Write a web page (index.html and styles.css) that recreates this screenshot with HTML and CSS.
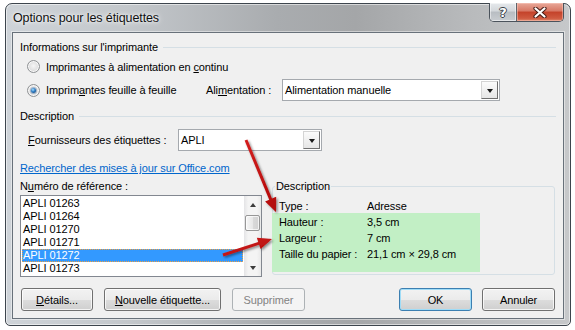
FILE: index.html
```html
<!DOCTYPE html>
<html lang="fr">
<head>
<meta charset="utf-8">
<title>Options pour les étiquettes</title>
<link rel="stylesheet" href="styles.css">
</head>
<body>
<div class="window">
  <div class="titlebar">
    <span class="title">Options pour les étiquettes</span>
    <div class="caption">
      <div class="cbtn help"><span class="qmark">?</span></div>
      <div class="cbtn close">
        <svg width="14" height="11" viewBox="0 0 14 11"><path d="M2.5 1.5 L11.5 9.5 M11.5 1.5 L2.5 9.5" stroke="#4a1f18" stroke-width="4.2" stroke-linecap="round"/><path d="M2.5 1.5 L11.5 9.5 M11.5 1.5 L2.5 9.5" stroke="#ffffff" stroke-width="2.2" stroke-linecap="round"/></svg>
      </div>
    </div>
  </div>
  <div class="client">
    <div class="ghead"><span>Informations sur l'imprimante</span></div>
    <div class="rrow r1"><span class="radio"></span><span class="rtext">Imprimantes à alimentation en <u>c</u>ontinu</span></div>
    <div class="rrow r2">
      <span class="radio checked"></span><span class="rtext r2label">Imprim<u>a</u>ntes feuille à feuille</span>
      <span class="alim-label">Ali<u>m</u>entation :</span>
      <div class="combo alim"><span class="ctext">Alimentation manuelle</span><span class="drop"><span class="tri-down"></span></span></div>
    </div>
    <div class="ghead h2"><span>Description</span></div>
    <div class="frow">
      <span class="flabel"><u>F</u>ournisseurs des étiquettes :</span>
      <div class="combo vendor"><span class="ctext">APLI</span><span class="drop"><span class="tri-down"></span></span></div>
    </div>
    <a class="link">Rechercher des mises à jour sur Office.com</a>
    <div class="lower">
      <div class="leftcol">
        <div class="lab">N<u>u</u>méro de référence :</div>
        <div class="listbox">
          <ul class="items">
            <li>APLI 01263</li>
            <li>APLI 01264</li>
            <li>APLI 01270</li>
            <li>APLI 01271</li>
            <li class="sel">APLI 01272</li>
            <li>APLI 01273</li>
          </ul>
          <div class="vscroll">
            <div class="sbtn"><span class="tri-up"></span></div>
            <div class="thumb"></div>
            <div class="track"></div>
            <div class="sbtn"><span class="tri-down small"></span></div>
          </div>
        </div>
      </div>
      <fieldset class="descbox">
        <legend>Description</legend>
        <div class="props">
          <span>Type :</span><span>Adresse</span>
          <span>Hauteur :</span><span>3,5 cm</span>
          <span>Largeur :</span><span>7 cm</span>
          <span>Taille du papier :</span><span>21,1 cm × 29,8 cm</span>
        </div>
      </fieldset>
    </div>
    <div class="buttons">
      <div class="btn b-details"><span><u>D</u>étails...</span></div>
      <div class="btn b-new"><span><u>N</u>ouvelle étiquette...</span></div>
      <div class="btn b-del disabled"><span>Supprimer</span></div>
      <div class="btn b-ok default"><span>OK</span></div>
      <div class="btn b-cancel"><span>Annuler</span></div>
    </div>
  </div>
</div>
<svg class="arrows" width="575" height="330" viewBox="0 0 575 330">
  <defs>
    <filter id="sh" x="-20%" y="-20%" width="140%" height="140%">
      <feDropShadow dx="1.5" dy="1.5" stdDeviation="1.2" flood-color="#000" flood-opacity="0.45"/>
    </filter>
    <linearGradient id="rg" x1="0" y1="0" x2="1" y2="1">
      <stop offset="0" stop-color="#d42020"/>
      <stop offset="1" stop-color="#b00808"/>
    </linearGradient>
  </defs>
  <polygon filter="url(#sh)" fill="url(#rg)" points="244.62,140.58 269.23,199.66 265.08,201.39 276,212 276.16,196.77 272.0,198.50 247.38,139.42"/>
  <polygon filter="url(#sh)" fill="url(#rg)" points="223.47,256.43 259.16,244.78 260.55,249.05 272,239 256.83,237.65 258.22,241.92 222.53,253.57"/>
</svg>
</body>
</html>
```
FILE: styles.css
```css
* { box-sizing: border-box; }
html, body { margin: 0; }
body {
  position: relative;
  width: 575px;
  height: 330px;
  padding: 3px 0 0 5px;
  background: #ffffff;
  overflow: hidden;
  font-family: "Liberation Sans", Arial, sans-serif;
  font-size: 11px;
  letter-spacing: -0.1px;
  color: #000;
}
u { text-decoration: underline; text-underline-offset: 1px; }

.window {
  width: 566px;
  height: 323px;
  border: 1px solid #3d454d;
  border-radius: 7px 7px 5px 5px;
  padding: 0 6px;
  background: linear-gradient(to right, #ced3d8 0%, #c3c7cb 22%, #a9acaf 48%, #a4a6a8 62%, #b8babc 82%, #c6c8ca 100%);
  box-shadow: inset 0 0 0 1px rgba(255,255,255,0.55);
}
.titlebar {
  height: 28px;
  display: flex;
  align-items: center;
}
.title {
  margin-left: 1px;
  font-size: 12.5px;
  color: #111;
  text-shadow: 0 0 6px rgba(255,255,255,0.95), 0 0 3px rgba(255,255,255,0.9);
}
.caption {
  margin-left: auto;
  align-self: flex-start;
  margin-top: -1px;
  display: flex;
  height: 19px;
  border: 1px solid #4b535c;
  border-top: none;
  border-radius: 0 0 5px 5px;
  overflow: hidden;
}
.cbtn {
  height: 18px;
  display: flex;
  align-items: center;
  justify-content: center;
}
.help {
  width: 27px;
  background: linear-gradient(#e6e9ec, #d3d7db 45%, #b8bdc2 50%, #c9cdd1);
  border-right: 1px solid #5d646b;
  box-shadow: inset 0 0 0 1px rgba(255,255,255,0.5);
}
.qmark {
  font-family: "DejaVu Sans", sans-serif;
  font-weight: bold;
  font-size: 13px;
  line-height: 13px;
  color: #fff;
  text-shadow: 1px 0 0 #3a4148, -1px 0 0 #3a4148, 0 1px 0 #3a4148, 0 -1px 0 #3a4148;
}
.close {
  width: 46px;
  background: linear-gradient(#e8a899, #d77764 45%, #c4422a 50%, #cf5a40 85%, #df8a6e);
  box-shadow: inset 0 0 0 1px rgba(255,210,200,0.45);
}

.client {
  height: 287px;
  border: 1px solid #68717a;
  box-shadow: 0 0 0 1px rgba(255,255,255,0.45);
  background: #f0f0f0;
  padding: 7px 7px 0 7px;
}
.ghead {
  height: 14px;
  line-height: 14px;
  display: flex;
  align-items: center;
}
.ghead::after {
  content: "";
  flex: 1;
  height: 1px;
  margin-left: 5px;
  background: #d5dfe5;
}
.ghead.h2 { margin-top: 8px; }

.rrow {
  display: flex;
  align-items: center;
}
.rrow.r1 { margin-top: 4px; height: 17px; }
.rrow.r2 { margin-top: 4px; height: 22px; }
.radio {
  width: 13px;
  height: 13px;
  margin-left: 7px;
  border-radius: 50%;
  border: 1px solid #8f9294;
  background: radial-gradient(circle at 50% 45%, #f6f6f6 0%, #e4e4e4 45%, #c9c9c9 100%);
  box-shadow: inset 0 0 0 1px rgba(255,255,255,0.8);
  display: flex;
  align-items: center;
  justify-content: center;
  flex: none;
}
.radio.checked::after {
  content: "";
  width: 5px;
  height: 5px;
  border-radius: 50%;
  background: radial-gradient(circle at 40% 35%, #a9e2ff 0%, #2d7bc4 45%, #0d3966 100%);
  box-shadow: 0 0 0 1px rgba(30,80,140,0.35);
}
.rtext { margin-left: 6px; }
.r2label { width: 160px; flex: none; }
.alim-label { width: 76px; flex: none; }

.combo {
  height: 22px;
  border: 1px solid #a5a9ae;
  background: #fff;
  display: flex;
  align-items: center;
  padding: 1px;
  flex: none;
}
.combo.alim { width: 218px; }
.combo.vendor { width: 144px; }
.ctext { flex: 1; padding-left: 1px; }
.drop {
  width: 17px;
  height: 18px;
  border: 1px solid;
  border-color: #d4d4d4 #6f6f6f #6f6f6f #d4d4d4;
  background: linear-gradient(#fbfbfb, #e6e6e6);
  display: flex;
  align-items: center;
  justify-content: center;
}
.tri-down {
  width: 0;
  height: 0;
  border-left: 3.5px solid transparent;
  border-right: 3.5px solid transparent;
  border-top: 4px solid #1a1a1a;
  margin-top: 1px;
}
.tri-up {
  width: 0;
  height: 0;
  border-left: 3.5px solid transparent;
  border-right: 3.5px solid transparent;
  border-bottom: 4px solid #3c3c3c;
}
.tri-down.small { border-top-color: #3c3c3c; margin-top: 0; }

.frow {
  margin-top: 6px;
  height: 22px;
  display: flex;
  align-items: center;
}
.flabel { margin-left: 8px; width: 150px; flex: none; }

.link {
  display: block;
  margin-top: 10px;
  height: 14px;
  line-height: 14px;
  color: #0066cc;
  text-decoration: underline;
  text-underline-offset: 1px;
}

.lower {
  margin-top: 4px;
  display: flex;
  gap: 10px;
}
.leftcol { width: 242px; }
.lab { height: 14px; line-height: 14px; }
.listbox {
  margin-top: 2px;
  height: 82px;
  border: 1px solid #828790;
  background: #fff;
  display: flex;
}
.items {
  flex: 1;
  margin: 0;
  padding: 1px 1px 0 1px;
  list-style: none;
}
.items li {
  height: 13px;
  line-height: 13px;
  padding-left: 1px;
}
.items li.sel {
  background: #3399ff;
  color: #fff;
  outline: 1px dotted #f0a040;
  outline-offset: -1px;
}
.vscroll {
  width: 17px;
  display: flex;
  flex-direction: column;
  background: linear-gradient(to right, #e4e4e6, #f4f4f4 25%, #f4f4f4 75%, #e9e9e9);
}
.sbtn {
  height: 17px;
  display: flex;
  align-items: center;
  justify-content: center;
}
.thumb {
  margin: 2px 1px 0 1px;
  height: 16px;
  border: 1px solid #979797;
  border-radius: 2px;
  background: linear-gradient(to right, #f6f6f6, #e8e8e8 50%, #dadada 50%, #d2d2d2);
  box-shadow: inset 0 0 0 1px rgba(255,255,255,0.7);
}
.track { flex: 1; }

.descbox {
  margin: 0;
  padding: 0;
  width: 283px;
  height: 96px;
  border: 1px solid #d5dfe5;
  border-radius: 3px;
  min-width: 0;
}
.descbox legend {
  margin-left: 2px;
  padding: 0 1px;
  height: 14px;
  line-height: 14px;
}
.props {
  position: relative;
  z-index: 0;
  margin: 5px 0 0 6px;
  display: grid;
  grid-template-columns: 88px auto;
  grid-auto-rows: 16px;
  line-height: 16px;
}
.props::before {
  content: "";
  position: absolute;
  z-index: -1;
  left: -7px;
  top: 15px;
  width: 208px;
  height: 59px;
  background: #c2efc5;
}

.buttons {
  margin-top: 11px;
  height: 23px;
  display: flex;
}
.btn {
  height: 23px;
  border: 1px solid #707070;
  border-radius: 3px;
  background: linear-gradient(#f2f2f2, #ebebeb 50%, #dddddd 50%, #cfcfcf);
  box-shadow: inset 0 0 0 1px rgba(255,255,255,0.75);
  display: flex;
  align-items: center;
  justify-content: center;
}
.b-details { margin-left: 1px; width: 72px; }
.b-new { margin-left: 11px; width: 117px; }
.b-del { margin-left: 11px; width: 73px; }
.b-ok { margin-left: auto; width: 73px; }
.b-cancel { margin-left: 10px; margin-right: 1px; width: 73px; }
.btn.disabled {
  border-color: #adb2b5;
  background: #f4f4f4;
  box-shadow: none;
  color: #838383;
}
.btn.default {
  border-color: #3c7fb1;
  box-shadow: inset 0 0 0 1px #9fdcf7;
}

.arrows {
  position: absolute;
  left: 0;
  top: 0;
  pointer-events: none;
}
```
